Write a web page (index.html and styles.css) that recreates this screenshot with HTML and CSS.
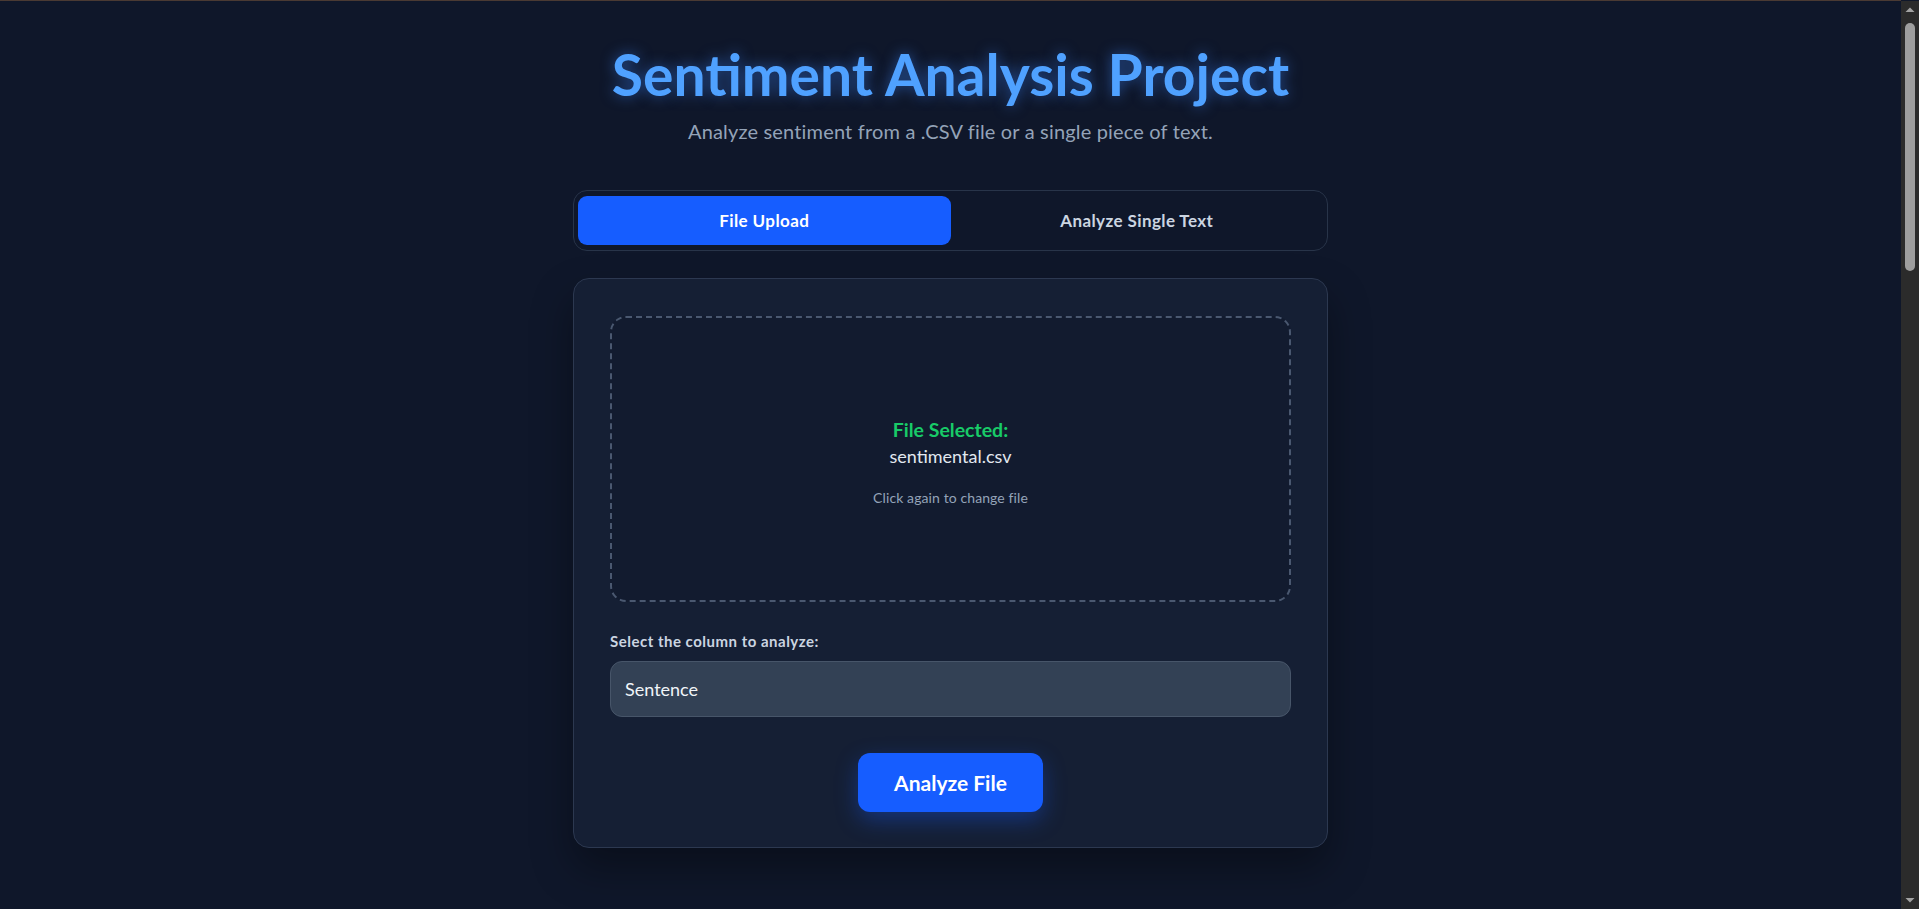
FILE: index.html
```html
<!DOCTYPE html>
<html lang="en">
<head>
<meta charset="utf-8">
<title>Sentiment Analysis Project</title>
<link rel="stylesheet" href="styles.css">
</head>
<body>
<div class="topline"></div>
<main class="page">
  <header class="hero">
    <h1 class="title">Sentiment Analysis Project</h1>
    <p class="subtitle">Analyze sentiment from a .CSV file or a single piece of text.</p>
  </header>

  <nav class="tabs">
    <button class="tab tab-active">File Upload</button>
    <button class="tab">Analyze Single Text</button>
  </nav>

  <section class="card">
    <div class="dropzone">
      <div class="drop-title">File Selected:</div>
      <div class="drop-file">sentimental.csv</div>
      <div class="drop-hint">Click again to change file</div>
    </div>

    <label class="field-label">Select the column to analyze:</label>
    <div class="select">Sentence</div>

    <div class="actions">
      <button class="analyze-btn">Analyze File</button>
    </div>
  </section>
</main>

<div class="scrollbar" aria-hidden="true">
  <svg class="sb-arrow sb-up" width="18" height="17" viewBox="0 0 18 17"><path d="M4.5 11 L9 6.5 L13.5 11 Z" fill="#a3a3a3"/></svg>
  <div class="sb-thumb"></div>
  <svg class="sb-arrow sb-down" width="18" height="17" viewBox="0 0 18 17"><path d="M4.5 6 L9 10.5 L13.5 6 Z" fill="#a3a3a3"/></svg>
</div>
</body>
</html>
```

FILE: styles.css
```css
html {
  color-scheme: dark;
  background: #0f172a;
}
body {
  margin: 0;
  padding-right: 18px;
  background: #0f172a;
  font-family: "Lato", "Noto Sans", sans-serif;
  color: #e2e8f0;
}
.topline {
  height: 1px;
  background: #4a3a33;
}
.page {
  width: 755px;
  margin: 0 auto;
  padding-bottom: 60px;
  display: flex;
  flex-direction: column;
}
.hero {
  padding-top: 40px;
  text-align: center;
}
.title {
  margin: 0;
  font-size: 57px;
  line-height: 66px;
  font-weight: 700;
  color: #4fa1ff;
  text-shadow: 0 0 14px rgba(59, 130, 246, 0.55);
}
.subtitle {
  margin: 10px 0 0;
  font-size: 20px;
  line-height: 28px;
  letter-spacing: 0.17px;
  color: #94a3b8;
}
.tabs {
  margin-top: 45px;
  display: flex;
  padding: 5px 4px;
  border: 1px solid #283449;
  border-radius: 14px;
  background: #0f172a;
}
.tab {
  flex: 1;
  height: 49px;
  border: 0;
  border-radius: 9px;
  background: transparent;
  font-family: inherit;
  font-size: 17px;
  letter-spacing: 0.4px;
  font-weight: 700;
  color: #cbd5e1;
}
.tab-active {
  background: #165dff;
  color: #ffffff;
}
.card {
  margin-top: 27px;
  padding: 37px 36px 35px;
  border: 1px solid #2c3850;
  border-radius: 16px;
  background: #151f34;
  box-shadow: 0 20px 40px rgba(0, 0, 0, 0.35);
  display: flex;
  flex-direction: column;
}
.dropzone {
  box-sizing: border-box;
  height: 286px;
  padding-top: 5px;
  border: 2px dashed #4a5870;
  border-radius: 16px;
  background: #121b2f;
  display: flex;
  flex-direction: column;
  align-items: center;
  justify-content: center;
}
.drop-title {
  font-size: 19.5px;
  line-height: 26px;
  font-weight: 700;
  color: #18cb68;
}
.drop-file {
  font-size: 18px;
  line-height: 26px;
  color: #e2e8f0;
}
.drop-hint {
  margin-top: 20px;
  font-size: 14px;
  line-height: 18px;
  letter-spacing: 0.1px;
  color: #94a3b8;
}
.field-label {
  margin-top: 29px;
  font-size: 15px;
  line-height: 20px;
  letter-spacing: 0.5px;
  font-weight: 700;
  color: #cbd5e1;
}
.select {
  margin-top: 10px;
  height: 54px;
  padding: 0 14px;
  border: 1px solid #475569;
  border-radius: 12px;
  background: #334155;
  display: flex;
  align-items: center;
  font-size: 18px;
  color: #f1f5f9;
}
.actions {
  margin-top: 36px;
  display: flex;
  justify-content: center;
}
.analyze-btn {
  width: 185px;
  height: 59px;
  border: 0;
  border-radius: 12px;
  background: #165dff;
  color: #ffffff;
  font-family: inherit;
  font-size: 21px;
  font-weight: 700;
  box-shadow: 0 8px 22px rgba(22, 93, 255, 0.35);
}

/* simulated dark browser scrollbar */
.scrollbar {
  position: fixed;
  top: 1px;
  right: 0;
  bottom: 0;
  width: 18px;
  background: #2b2b2b;
}
.sb-arrow {
  position: absolute;
  left: 0;
  display: block;
}
.sb-up { top: 0; }
.sb-down { bottom: 0; }
.sb-thumb {
  position: absolute;
  top: 22px;
  left: 4px;
  width: 10px;
  height: 248px;
  border-radius: 5px;
  background: #9e9e9e;
}
```
